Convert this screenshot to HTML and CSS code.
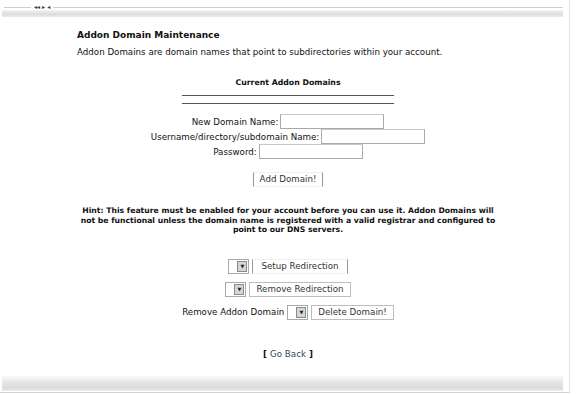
FILE: index.html
```html
<!DOCTYPE html>
<html lang="en">
<head>
  <meta charset="UTF-8" />
  <title>Addon Domain Maintenance</title>
  <link rel="stylesheet" href="styles.css">
</head>
<body>

  <div class="frame">
    <div class="topline"><span class="tab">◂◂ ▸ ◂</span></div>
    <div class="shade"></div>

    <div class="content">
      <h1>Addon Domain Maintenance</h1>
      <p class="intro">Addon Domains are domain names that point to subdirectories within your account.</p>

      <div class="current">
        <h2>Current Addon Domains</h2>
        <div class="rule"></div>
        <div class="rule"></div>
      </div>

      <form class="addform">
        <div class="row">
          <label>New Domain Name:</label>
          <span class="field"></span>
        </div>
        <div class="row">
          <label>Username/directory/subdomain Name:</label>
          <span class="field"></span>
        </div>
        <div class="row">
          <label>Password:</label>
          <span class="field"></span>
        </div>
        <div class="row submit">
          <span class="btn sides">Add Domain!</span>
        </div>
      </form>

      <p class="hint">Hint: This feature must be enabled for your account before you can use it. Addon Domains will not be functional unless the domain name is registered with a valid registrar and configured to point to our DNS servers.</p>

      <div class="actions">
        <div class="row">
          <span class="select"><span class="arrow">▼</span></span>
          <span class="btn sides wide">Setup Redirection</span>
        </div>
        <div class="row">
          <span class="select"><span class="arrow">▼</span></span>
          <span class="btn">Remove Redirection</span>
        </div>
        <div class="row">
          <label>Remove Addon Domain</label>
          <span class="select"><span class="arrow">▼</span></span>
          <span class="btn">Delete Domain!</span>
        </div>
      </div>

      <p class="back">[ <a href="#">Go Back</a> ]</p>
    </div>

    <div class="shade bottom"></div>
  </div>

</body>
</html>
```

FILE: styles.css
```css
:root {
  --text: #111;
  --line: #bdbdbd;
  --field: #a9a9a9;
  --link: #2f4858;
}

* {
  box-sizing: border-box;
}

body {
  margin: 0;
  background: #fff;
  color: var(--text);
  font-family: 'DejaVu Sans', Verdana, sans-serif;
  font-size: 8.7px;
}

.frame {
  width: 570px;
  height: 393px;
  border-right: 1px solid #e2e2e2;
  border-bottom: 1px solid #d4d4d4;
  display: flex;
  flex-direction: column;
}

.topline {
  height: 8px;
  margin: 0 6px 0 4px;
  border-bottom: 1px solid #cfcfcf;
  position: relative;
}

.tab {
  position: absolute;
  left: 27px;
  top: 4px;
  padding: 0 3px;
  background: #fff;
  font-size: 6px;
  font-weight: bold;
  line-height: 6px;
  color: #333;
}

.shade {
  height: 7px;
  margin: 2px 6px 0 2px;
  background: linear-gradient(#f4f4f4, #dcdcdc 60%, #ececec);
}

.shade.bottom {
  height: 15px;
  margin: auto 6px 1px 2px;
  background: linear-gradient(#fafafa, #e6e6e6 40%, #dadada 80%, #ececec);
}

.content {
  padding: 12px 0 0 77px;
}

h1 {
  margin: 0;
  font-size: 9px;
  line-height: 12px;
}

.intro {
  margin: 6px 0 0;
  line-height: 11px;
}

.current {
  width: 212px;
  margin: 20px 0 0 105px;
}

h2 {
  margin: 0;
  text-align: center;
  font-size: 7.8px;
  line-height: 10px;
}

.rule {
  height: 8px;
  border-bottom: 1px solid #555;
}

.addform {
  width: 422px;
  margin-top: 10px;
}

.row {
  display: flex;
  justify-content: center;
  align-items: center;
  gap: 2px;
  height: 15px;
}

.field {
  width: 104px;
  height: 15px;
  border: 1px solid var(--field);
  border-top-color: #c8c8c8;
}

.row.submit {
  margin-top: 12px;
  height: 16px;
}

.btn {
  display: inline-flex;
  align-items: center;
  height: 15px;
  padding: 0 6px;
  border: 1px solid var(--line);
  color: #333;
}

.btn.sides {
  border-top-color: #f0f0f0;
  border-bottom-color: #f0f0f0;
  border-left-color: #999;
  border-right-color: #999;
}

.btn.wide {
  padding: 0 8px;
}

.hint {
  width: 422px;
  margin: 19px 0 0;
  text-align: center;
  font-weight: bold;
  font-size: 7.7px;
  line-height: 9.5px;
}

.actions {
  width: 422px;
  margin-top: 24px;
  display: flex;
  flex-direction: column;
  gap: 8px;
}

.actions .row {
  gap: 3px;
}

.select {
  display: inline-flex;
  justify-content: flex-end;
  width: 21px;
  height: 15px;
  padding: 1px;
  border: 1px solid var(--field);
  background: #fff;
}

.arrow {
  width: 10px;
  display: flex;
  align-items: center;
  justify-content: center;
  background: #d6d6d6;
  border: 1px solid #8a8a8a;
  font-size: 5px;
  color: #222;
}

.back {
  width: 422px;
  margin: 29px 0 0;
  text-align: center;
  font-weight: bold;
  line-height: 11px;
}

.back a {
  font-weight: normal;
  color: var(--link);
  text-decoration: none;
}
```
